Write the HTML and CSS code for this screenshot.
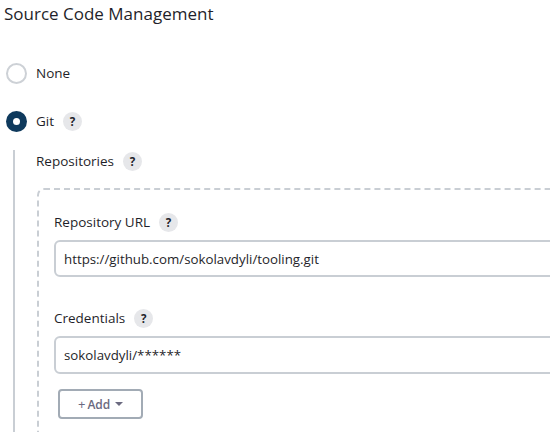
FILE: index.html
```html
<!DOCTYPE html>
<html>
<head>
<meta charset="utf-8">
<link rel="stylesheet" href="styles.css">
</head>
<body>
<div class="page">
  <h2 class="title">Source Code Management</h2>
  <div class="radio-row first">
    <span class="radio"></span>
    <span class="radio-label">None</span>
  </div>
  <div class="radio-row second">
    <span class="radio checked"></span>
    <span class="radio-label">Git</span>
    <span class="help">?</span>
  </div>
  <div class="nested">
    <div class="label-row">
      <span>Repositories</span>
      <span class="help">?</span>
    </div>
    <div class="repeated">
      <div class="label-row field-first">
        <span>Repository URL</span>
        <span class="help">?</span>
      </div>
      <div class="input">https://github.com/sokolavdyli/tooling.git</div>
      <div class="label-row field-next">
        <span>Credentials</span>
        <span class="help">?</span>
      </div>
      <div class="input select">sokolavdyli/******</div>
      <button class="add-btn"><span class="plus">+</span>Add<span class="caret"></span></button>
    </div>
  </div>
</div>
</body>
</html>
```
FILE: styles.css
```css
html, body {
  margin: 0;
  padding: 0;
  background: #ffffff;
  overflow: hidden;
}
body {
  font-family: "Open Sans", "Noto Sans", sans-serif;
  color: #1f1f2a;
  font-size: 13.5px;
}
.page {
  box-sizing: border-box;
  padding-left: 4px;
  width: 550px;
  height: 432px;
  overflow: hidden;
}
.title {
  margin: 0;
  height: 28px;
  line-height: 28px;
  font-size: 17px;
  font-weight: 400;
  color: #1f1f2a;
}
.radio-row {
  display: flex;
  align-items: center;
  height: 24px;
  padding-left: 2px;
}
.radio-row.first { margin-top: 33px; }
.radio-row.second { margin-top: 24px; }
.radio {
  box-sizing: border-box;
  width: 21px;
  height: 21px;
  border-radius: 50%;
  border: 2px solid #cdd1d6;
  background: #fff;
  margin-right: 9px;
  flex: none;
}
.radio.checked {
  border: none;
  background: #0f3a5d;
  position: relative;
}
.radio.checked::after {
  content: "";
  position: absolute;
  left: 7px;
  top: 7px;
  width: 7px;
  height: 7px;
  border-radius: 50%;
  background: #fff;
}
.help {
  display: inline-flex;
  align-items: center;
  justify-content: center;
  width: 19px;
  height: 19px;
  border-radius: 50%;
  background: #e6e7ea;
  color: #1f1f2a;
  font-weight: 700;
  font-size: 11.5px;
  margin-left: 9px;
  flex: none;
}
.nested {
  margin-top: 17px;
  margin-left: 9px;
  border-left: 2px solid #c9ced4;
  padding-left: 21px;
  padding-bottom: 40px;
}
.label-row {
  display: flex;
  align-items: center;
  height: 22px;
}
.repeated {
  margin-top: 16px;
  margin-left: 1px;
  margin-right: -30px;
  border: 2px dashed #c9ced4;
  border-radius: 7px;
  padding: 21px 0 30px 15px;
}
.field-next { margin-top: 30px; }
.input {
  box-sizing: border-box;
  margin-top: 7px;
  height: 37px;
  border: 2px solid #c9ced4;
  border-radius: 6px;
  padding-left: 8px;
  display: flex;
  align-items: center;
  font-size: 13.3px;
}
.input.select { height: 38px; }
.add-btn {
  display: flex;
  align-items: center;
  box-sizing: border-box;
  margin-top: 15px;
  margin-left: 4px;
  width: 85px;
  height: 30px;
  border: 2px solid #a2abb5;
  border-radius: 4px;
  background: #fff;
  padding: 0 0 0 18px;
  font-family: "Open Sans", "Noto Sans", sans-serif;
  font-size: 12px;
  font-weight: 600;
  color: #6b6a80;
}
.plus {
  font-weight: 400;
  font-size: 13px;
  margin-right: 2px;
}
.caret {
  width: 0;
  height: 0;
  border-left: 4px solid transparent;
  border-right: 4px solid transparent;
  border-top: 4px solid #6b6a80;
  margin-left: 5px;
}
```
